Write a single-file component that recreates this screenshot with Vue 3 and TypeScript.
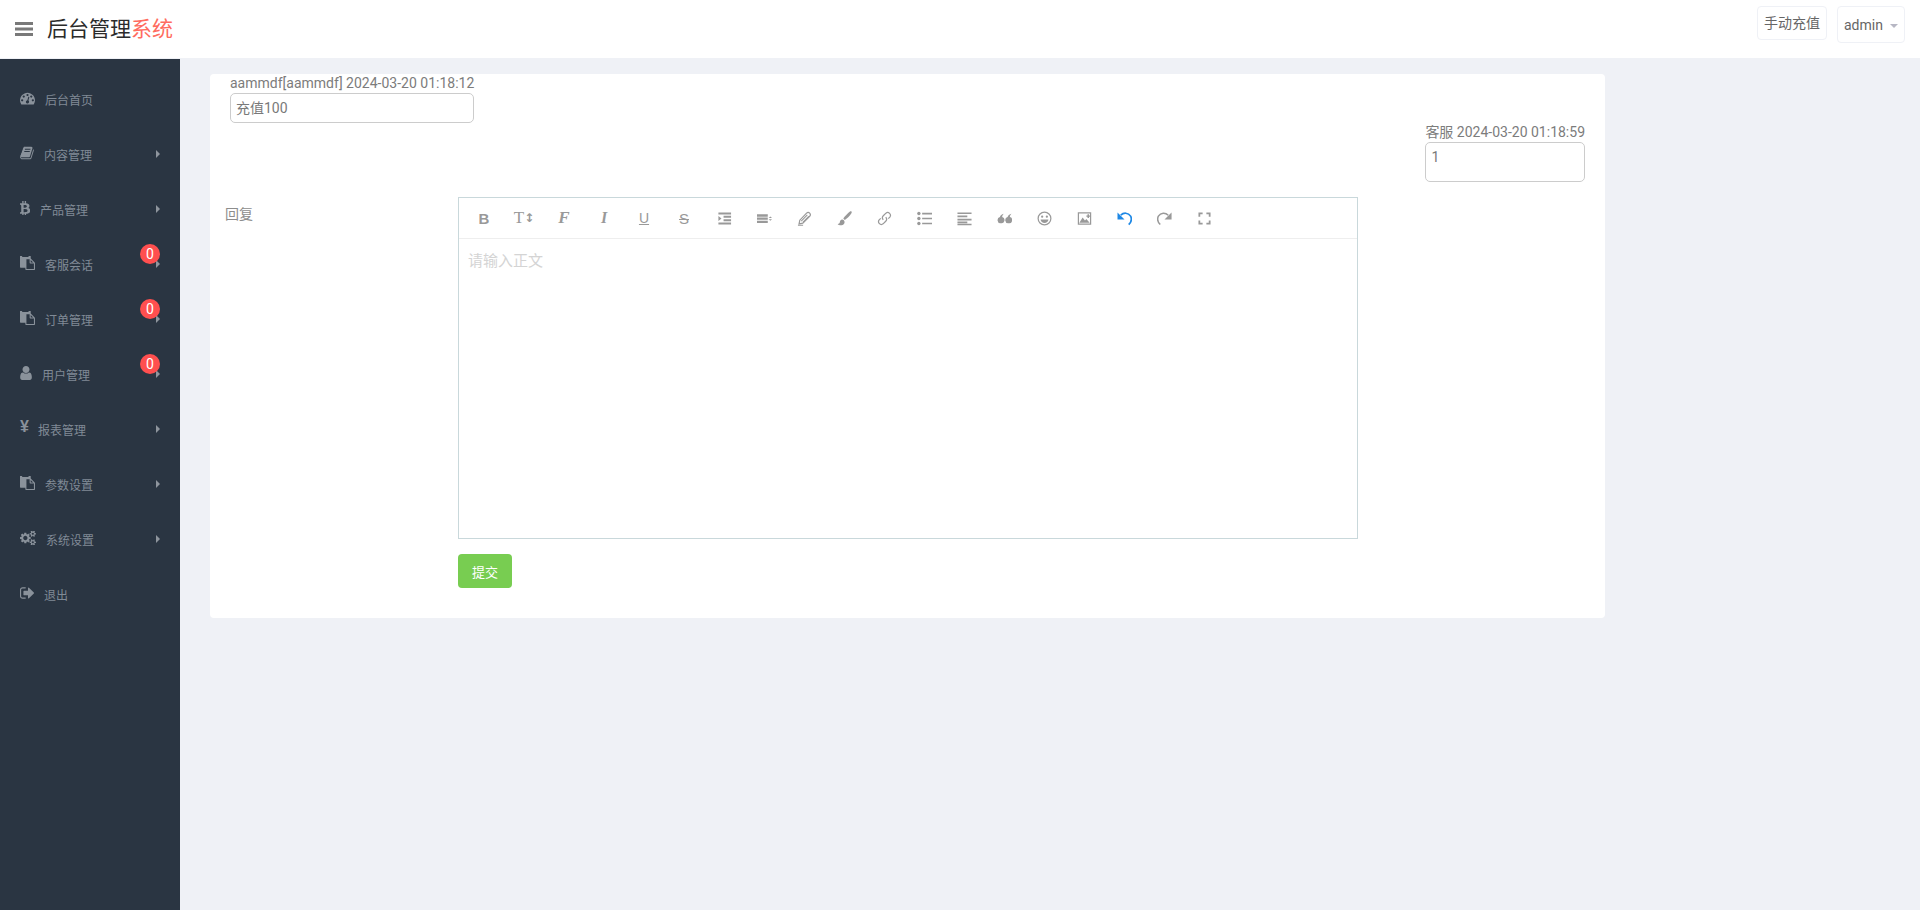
<template>
  <div class="page">
    <header class="topbar">
      <div class="brand">
        <svg class="burger" viewBox="0 0 18 14" width="18" height="14">
          <rect width="18" height="3" y="0" />
          <rect width="18" height="3" y="5.5" />
          <rect width="18" height="3" y="11" />
        </svg>
        <div class="logo">后台管理<span>系统</span></div>
      </div>
      <div class="top-actions">
        <button type="button" class="top-btn">手动充值</button>
        <button type="button" class="top-btn admin">admin<i class="caret"></i></button>
      </div>
    </header>

    <div class="body">
      <aside class="sidebar">
        <a v-for="item in menu" :key="item.label" class="menu-item">
          <svg
            v-if="item.icon"
            class="menu-icon"
            :viewBox="item.icon.box"
            :width="item.icon.width"
            height="14"
          >
            <path :d="item.icon.d" />
          </svg>
          <span v-else class="yen">¥</span>
          <span class="menu-label">{{ item.label }}</span>
          <i v-if="item.arrow" class="arrow"></i>
          <span v-if="item.badge !== undefined" class="badge">{{ item.badge }}</span>
        </a>
      </aside>

      <main class="main">
        <section class="card">
          <div class="msg">
            <div class="msg-inner">
              <div class="msg-meta">aammdf[aammdf] 2024-03-20 01:18:12</div>
              <div class="msg-text">充值100</div>
            </div>
          </div>
          <div class="msg msg-right">
            <div class="msg-inner">
              <div class="msg-meta">客服 2024-03-20 01:18:59</div>
              <div class="msg-text tall">1</div>
            </div>
          </div>

          <form class="reply" @submit.prevent>
            <label class="reply-label">回复</label>
            <div class="reply-field">
              <div class="editor">
                <div class="toolbar">
                  <span v-for="(tool, i) in tools" :key="i" class="tool" :class="tool.cls">
                    <template v-if="tool.text">{{ tool.text }}</template>
                    <small v-if="tool.sub">{{ tool.sub }}</small>
                    <svg v-if="tool.svg" viewBox="0 0 16 16" width="15" height="15" v-html="tool.svg"></svg>
                  </span>
                </div>
                <div class="editor-body">请输入正文</div>
              </div>
              <button type="submit" class="submit">提交</button>
            </div>
          </form>
        </section>
      </main>
    </div>
  </div>
</template>

<script setup lang="ts">
interface MenuIcon {
  box: string
  width: number
  d: string
}

interface MenuItem {
  label: string
  icon?: MenuIcon
  arrow?: boolean
  badge?: number
}

interface Tool {
  text?: string
  sub?: string
  cls?: string
  svg?: string
}

const gauge: MenuIcon = {
  box: '0 200 1792 1350',
  width: 15,
  d: 'M384 1152q0-53-37.5-90.5t-90.5-37.5-90.5 37.5-37.5 90.5 37.5 90.5 90.5 37.5 90.5-37.5 37.5-90.5zm192-448q0-53-37.5-90.5t-90.5-37.5-90.5 37.5-37.5 90.5 37.5 90.5 90.5 37.5 90.5-37.5 37.5-90.5zm428 481l101-382q6-26-7.5-48.5t-38.5-29.5-48 6.5-30 39.5l-101 382q-60 5-107 43.5t-63 98.5q-20 77 20 146t117 89 146-20 89-117q16-60-6-117t-72-91zm660-33q0-53-37.5-90.5t-90.5-37.5-90.5 37.5-37.5 90.5 37.5 90.5 90.5 37.5 90.5-37.5 37.5-90.5zm-640-640q0-53-37.5-90.5t-90.5-37.5-90.5 37.5-37.5 90.5 37.5 90.5 90.5 37.5 90.5-37.5 37.5-90.5zm448 192q0-53-37.5-90.5t-90.5-37.5-90.5 37.5-37.5 90.5 37.5 90.5 90.5 37.5 90.5-37.5 37.5-90.5zm320 448q0 261-141 483-19 29-54 29h-1402q-35 0-54-29-141-221-141-483 0-182 71-348t191-286 286-191 348-71 348 71 286 191 191 286 71 348z',
}

const book: MenuIcon = {
  box: '50 130 1700 1530',
  width: 14,
  d: 'M1703 478q40 57 18 129l-275 906q-19 64-76.5 107.5t-122.5 43.5h-923q-77 0-148.5-53.5t-99.5-131.5q-24-67-2-127 0-4 3-27t4-37q1-8-3-21.5t-3-19.5q2-11 8-21t16.5-23.5 16.5-23.5q23-38 45-91.5t30-91.5q3-10 .5-30t-.5-28q3-11 17-28t17-23q21-36 42-92t25-90q1-9-2.5-32t.5-28q4-13 22-30.5t22-22.5q19-26 42.5-84.5t27.5-96.5q1-8-3-25.5t-2-26.5q2-8 9-18t18-23 17-21q8-12 16.5-30.5t15-35 16-36 19.5-32 26.5-23.5 36-11.5 47.5 5.5l-1 3q38-9 51-9h761q74 0 114 56t18 130l-274 906q-36 119-71.5 153.5t-128.5 34.5h-869q-27 0-38 15-11 16-1 43 24 70 144 70h923q29 0 56-15.5t35-41.5l300-987q7-22 5-57 38 15 59 43zm-1064 2q-4 13 2 22.5t20 9.5h608q13 0 25.5-9.5t16.5-22.5l21-64q4-13-2-22.5t-20-9.5h-608q-13 0-25.5 9.5t-16.5 22.5zm-83 256q-4 13 2 22.5t20 9.5h608q13 0 25.5-9.5t16.5-22.5l21-64q4-13-2-22.5t-20-9.5h-608q-13 0-25.5 9.5t-16.5 22.5z',
}

const btc: MenuIcon = {
  box: '120 130 1110 1530',
  width: 10,
  d: 'M1167 640q18 182-131 258 117 28 175 103t45 214q-7 71-32.5 125t-64.5 89-97 58.5-121.5 34.5-145.5 15v255h-154v-251q-80 0-122-1v252h-154v-255q-18 0-54-.5t-55-.5h-200l31-183h111q50 0 58-51v-402h16q-6-1-16-1v-287q-13-68-89-68h-111v-164l212 1q64 0 97-1v-252h154v247q82-2 122-2v-245h154v252q79 7 140 22.5t113 45 82.5 78 36.5 114.5zm-215 545q0-36-15-64t-37-46-57.5-30.5-65.5-18.5-74-9-69-3-64.5 1-47.5 1v338q8 0 37 .5t48 .5 53-1.5 58.5-4 57-8.5 55.5-14 47.5-21 39.5-30 24.5-40 9.5-51zm-71-476q0-33-12.5-58.5t-30.5-42-48-28-55-16.5-61.5-8-58-2.5-54 1-39.5.5v307q5 0 34.5.5t46.5 0 50-2 55-5.5 51.5-11 48.5-18.5 37-27 27-38.5 9-51z',
}

const paste: MenuIcon = {
  box: '0 128 1792 1664',
  width: 15,
  d: 'M768 1664h896v-640h-416q-40 0-68-28t-28-68v-416h-384v1152zm256-1440v-64q0-13-9.5-22.5t-22.5-9.5h-704q-13 0-22.5 9.5t-9.5 22.5v64q0 13 9.5 22.5t22.5 9.5h704q13 0 22.5-9.5t9.5-22.5zm256 672h299l-299-299v299zm512 128v672q0 40-28 68t-68 28h-960q-40 0-68-28t-28-68v-160h-544q-40 0-68-28t-28-68v-1344q0-40 28-68t68-28h1088q40 0 68 28t28 68v328q21 13 36 28l408 408q28 28 48 76t20 88z',
}

const user: MenuIcon = {
  box: '256 128 1280 1536',
  width: 12,
  d: 'M1536 1399q0 109-62.5 187t-150.5 78h-854q-88 0-150.5-78t-62.5-187q0-85 8.5-160.5t31.5-152 58.5-131 94-89 134.5-34.5q131 128 313 128t313-128q76 0 134.5 34.5t94 89 58.5 131 31.5 152 8.5 160.5zm-256-887q0 159-112.5 271.5t-271.5 112.5-271.5-112.5-112.5-271.5 112.5-271.5 271.5-112.5 271.5 112.5 112.5 271.5z',
}

const cogs: MenuIcon = {
  box: '0 128 1920 1536',
  width: 16,
  d: 'M896 896q0-106-75-181t-181-75-181 75-75 181 75 181 181 75 181-75 75-181zm768 512q0-52-38-90t-90-38-90 38-38 90q0 53 37.5 90.5t90.5 37.5 90.5-37.5 37.5-90.5zm0-1024q0-52-38-90t-90-38-90 38-38 90q0 53 37.5 90.5t90.5 37.5 90.5-37.5 37.5-90.5zm-384 421v185q0 10-7 19.5t-16 10.5l-155 24q-11 35-32 76 34 48 90 115 7 11 7 20 0 12-7 19-23 30-82.5 89.5t-78.5 59.5q-11 0-21-7l-115-90q-37 19-77 31-11 108-23 155-7 24-30 24h-186q-11 0-20-7.5t-10-17.5l-23-153q-34-10-75-31l-118 89q-7 7-20 7-11 0-21-8-144-133-144-160 0-9 7-19 10-14 41-53t47-61q-23-44-35-82l-152-24q-10-1-17-9.5t-7-19.5v-185q0-10 7-19.5t16-10.5l155-24q11-35 32-76-34-48-90-115-7-11-7-20 0-12 7-20 22-30 82-89t79-59q11 0 21 7l115 90q34-18 77-32 11-108 23-154 7-24 30-24h186q11 0 20 7.5t10 17.5l23 153q34 10 75 31l118-89q8-7 20-7 11 0 21 8 144 133 144 160 0 8-7 19-12 16-42 54t-45 60q23 48 34 82l152 23q10 2 17 10.5t7 19.5zm640 533v140q0 16-149 31-12 27-30 52 51 113 51 138 0 4-4 7-122 71-124 71-8 0-46-47t-52-68q-20 2-30 2t-30-2q-14 21-52 68t-46 47q-2 0-124-71-4-3-4-7 0-25 51-138-18-25-30-52-149-15-149-31v-140q0-16 149-31 13-29 30-52-51-113-51-138 0-4 4-7 4-2 35-20t59-34 30-16q8 0 46 46.5t52 67.5q20-2 30-2t30 2q51-71 92-112l6-2q4 0 124 70 4 3 4 7 0 25-51 138 17 23 30 52 149 15 149 31zm0-1024v140q0 16-149 31-12 27-30 52 51 113 51 138 0 4-4 7-122 71-124 71-8 0-46-47t-52-68q-20 2-30 2t-30-2q-14 21-52 68t-46 47q-2 0-124-71-4-3-4-7 0-25 51-138-18-25-30-52-149-15-149-31v-140q0-16 149-31 13-29 30-52-51-113-51-138 0-4 4-7 4-2 35-20t59-34 30-16q8 0 46 46.5t52 67.5q20-2 30-2t30 2q51-71 92-112l6-2q4 0 124 70 4 3 4 7 0 25-51 138 17 23 30 52 149 15 149 31z',
}

const signOut: MenuIcon = {
  box: '64 224 1568 1344',
  width: 14,
  d: 'M704 1440q0 4 1 20t.5 26.5-3 23.5-10 19.5-20.5 6.5h-320q-119 0-203.5-84.5t-84.5-203.5v-704q0-119 84.5-203.5t203.5-84.5h320q13 0 22.5 9.5t9.5 22.5q0 4 1 20t.5 26.5-3 23.5-10 19.5-20.5 6.5h-320q-66 0-113 47t-47 113v704q0 66 47 113t113 47h312l11.5 1 11.5 3 8 5.5 7 9 2 13.5zm928-544q0 26-19 45l-544 544q-19 19-45 19t-45-19-19-45v-288h-448q-26 0-45-19t-19-45v-384q0-26 19-45t45-19h448v-288q0-26 19-45t45-19 45 19l544 544q19 19 19 45z',
}

const menu: MenuItem[] = [
  { label: '后台首页', icon: gauge },
  { label: '内容管理', icon: book, arrow: true },
  { label: '产品管理', icon: btc, arrow: true },
  { label: '客服会话', icon: paste, arrow: true, badge: 0 },
  { label: '订单管理', icon: paste, arrow: true, badge: 0 },
  { label: '用户管理', icon: user, arrow: true, badge: 0 },
  { label: '报表管理', arrow: true },
  { label: '参数设置', icon: paste, arrow: true },
  { label: '系统设置', icon: cogs, arrow: true },
  { label: '退出', icon: signOut },
]

// 编辑器工具栏,字母按钮用真实文字,其余是 svg
const tools: Tool[] = [
  { text: 'B', cls: 't-bold' },
  { text: 'T', sub: '↕', cls: 't-size' },
  { text: 'F', cls: 't-font' },
  { text: 'I', cls: 't-italic' },
  { text: 'U', cls: 't-under' },
  { text: 'S', cls: 't-strike' },
  { svg: '<path d="M1.500 1.500h13.500v2.200H1.500zM7 5.100h8v2.200H7zM7 8.700h8v2.200H7zM1.500 12.300h13.500v2.200H1.500zM1.500 5.400l3.300 2.600-3.300 2.600z"/>' },
  { svg: '<path d="M0 3.500h11.500v2.500H0zM0 6.900h11.500v2.500H0zM0 10.300h11.500v2.500H0zM12.500 7.500 14.200 5.800 16 7.500zM12.500 8.700H16l-1.800 1.700z"/>' },
  { svg: '<path d="M2.200 13.800l.8-4L10.200 2.300c1-.9 2.500-.8 3.300 0s.9 2.300 0 3.300L6.200 13z" fill="none" stroke="currentColor" stroke-width="1.300"/><path d="M4.500 10.800 11 4.200M6.200 12 12.500 5.600M1 15.200h5.500" fill="none" stroke="currentColor" stroke-width="1.100"/>' },
  { svg: '<path d="M15.500.6c-.5-.5-1.200-.4-1.700 0C11.500 2.600 8 6 6.700 8l1.600 1.600C10.300 8.300 13.800 5 15.400 2.300c.4-.6.500-1.200.1-1.700zM5.700 9C3.600 9 3.200 10.600 3 12c-.2 1.100-1.100 1.700-2.300 2 1.700 1.500 5.300 1.700 6.900-.5C8.700 12 8 9.300 5.700 9z"/>' },
  { svg: '<path d="M9.300 6.700a3 3 0 0 1 0 4.200l-2.800 2.800a3 3 0 0 1-4.200-4.200L4 7.800M6.700 9.300a3 3 0 0 1 0-4.200l2.800-2.800a3 3 0 0 1 4.200 4.200L12 8.200" fill="none" stroke="currentColor" stroke-width="1.300"/>' },
  { svg: '<path d="M5.500 1.800H16v1.800H5.500zM5.500 7.100H16v1.800H5.500zM5.500 12.400H16v1.800H5.500z"/><circle cx="2" cy="2.700" r="1.800"/><circle cx="2" cy="8" r="1.800"/><circle cx="2" cy="13.300" r="1.800"/>' },
  { svg: '<path d="M.5 1.500h15v1.800H.5zM.5 4.900h10.500v1.800H.5zM.5 8.300h15v1.800H.5zM.5 11.200h10.500V13H.5zM.5 13.600h15v1.600H.5z"/>' },
  { svg: '<path d="M3.700 13a3.300 3.300 0 0 1-.6-6.500C3.700 4.700 5 3.500 7.200 3c-1 1.100-1.600 2-1.700 3.500A3.300 3.300 0 0 1 3.700 13zM11.900 13a3.300 3.300 0 0 1-.6-6.500c.6-1.800 1.900-3 4.100-3.500-1 1.100-1.600 2-1.700 3.500a3.300 3.300 0 0 1-1.800 6.500z"/>' },
  { svg: '<circle cx="8" cy="8" r="6.800" fill="none" stroke="currentColor" stroke-width="1.300"/><circle cx="5.500" cy="6" r="1.200"/><circle cx="10.500" cy="6" r="1.200"/><path d="M3.800 9h8.400c-.3 2.300-2 3.700-4.200 3.700S4.100 11.300 3.800 9z"/>' },
  { svg: '<path d="M1.500 2h13v12h-13z" fill="none" stroke="currentColor" stroke-width="1.300"/><path d="M2.500 12.500 6 7l2.500 3 1.500-1.500 3.500 4z"/><path d="M11.200 3.500h1.600v1.300H14v1.300h-1.200v1.300h-1.600V6.100H10V4.800h1.200z"/>' },
  { cls: 'undo', svg: '<path d="M4 4.500C7 1.500 12 1.500 14.500 5.500 16 8.500 15 12 12.500 14.500" fill="none" stroke="currentColor" stroke-width="1.800"/><path d="M.5 1.500V9h7.500z"/>' },
  { svg: '<path d="M12 4.500C9 1.500 4 1.500 1.500 5.500 0 8.500 1 12 3.500 14.500" fill="none" stroke="currentColor" stroke-width="1.600"/><path d="M15.500 1.500V9H8z"/>' },
  { svg: '<path d="M2.500 6V2.500H6M10 2.500h3.500V6M13.500 10v3.500H10M6 13.500H2.500V10" fill="none" stroke="currentColor" stroke-width="1.900"/>' },
]
</script>

<style scoped>
.page {
  min-height: 910px;
  display: flex;
  flex-direction: column;
  font-family: Roboto, 'Noto Sans CJK SC', sans-serif;
  font-size: 14px;
  color: #797979;
  background: #eff1f6;
}

/* 顶部 */
.topbar {
  height: 58px;
  flex: none;
  background: #fff;
  display: flex;
  justify-content: space-between;
  align-items: flex-start;
  padding-right: 15px;
  margin-bottom: 1px;
}

.brand {
  display: flex;
  align-items: center;
  height: 58px;
  padding-left: 15px;
}

.burger {
  fill: #797979;
}

.logo {
  margin-left: 14px;
  margin-top: -5px;
  font-size: 21px;
  color: #2b2b2b;
  font-family: 'Noto Sans CJK SC', sans-serif;
}

.logo span {
  color: #ff6c60;
}

.top-actions {
  display: flex;
  align-items: flex-start;
  gap: 10px;
  padding-top: 6px;
}

.top-btn {
  height: 34px;
  padding: 0 6px 3px;
  border: 1px solid #eff1f6;
  border-radius: 4px;
  background: #fff;
  color: #666;
  font: inherit;
  line-height: 28px;
  font-family: 'Noto Sans CJK SC', sans-serif;
}

.admin {
  height: 37px;
  width: 68px;
  padding-bottom: 0;
  font-family: Roboto, sans-serif;
  font-size: 14px;
  display: flex;
  align-items: center;
  justify-content: space-between;
}

.caret {
  width: 0;
  height: 0;
  border-left: 4px solid transparent;
  border-right: 4px solid transparent;
  border-top: 4px solid #b7b7c4;
  margin-top: 2px;
}

/* 侧边栏 */
.body {
  flex: 1;
  display: flex;
}

.sidebar {
  width: 180px;
  flex: none;
  box-sizing: border-box;
  background: #2a3542;
  padding-top: 12px;
}

.menu-item {
  position: relative;
  height: 55px;
  display: flex;
  align-items: center;
  padding: 0 20px;
  color: #808a96;
  font-size: 12px;
  font-family: 'Noto Sans CJK SC', sans-serif;
}

.menu-label {
  padding-top: 1px;
}

.menu-icon {
  fill: #8a929b;
  flex: none;
  margin-right: 10px;
  margin-top: -1px;
}

.yen {
  width: 8px;
  margin-right: 10px;
  font-size: 16px;
  font-weight: 700;
  color: #8a929b;
  font-family: 'Liberation Sans', sans-serif;
  margin-top: -3px;
}

.arrow {
  margin-left: auto;
  width: 0;
  height: 0;
  border-top: 4px solid transparent;
  border-bottom: 4px solid transparent;
  border-left: 4px solid #8e959d;
}

.badge {
  position: absolute;
  left: 140px;
  top: 8px;
  width: 20px;
  height: 20px;
  border-radius: 50%;
  background: #ff4f4f;
  color: #fff;
  font-size: 14px;
  line-height: 20px;
  text-align: center;
  font-family: Roboto, sans-serif;
}

/* 内容 */
.main {
  flex: 1;
  padding: 15px 30px;
}

.card {
  width: 1395px;
  box-sizing: border-box;
  background: #fff;
  border-radius: 4px;
  padding: 0 20px 30px 15px;
}

.msg {
  padding-left: 5px;
}

.msg-right {
  display: flex;
  justify-content: flex-end;
}

.msg-inner {
  display: inline-block;
}

.msg-meta {
  line-height: 19px;
  color: #7c7c7c;
}

.msg-text {
  box-sizing: border-box;
  height: 30px;
  padding: 4px 5px;
  border: 1px solid #ccc;
  border-radius: 5px;
  line-height: 20px;
}

.tall {
  height: 40px;
}

.reply {
  display: flex;
  margin-top: 15px;
}

.reply-label {
  width: 233px;
  flex: none;
  padding-top: 7px;
  line-height: 20px;
  color: #8d8d8d;
}

.editor {
  width: 900px;
  height: 342px;
  box-sizing: border-box;
  border: 1px solid #c9d8db;
}

.toolbar {
  height: 40px;
  padding: 0 5px;
  display: flex;
  border-bottom: 1px solid #eeeeee;
  color: #999;
}

.tool {
  width: 40px;
  height: 40px;
  flex: none;
  display: flex;
  align-items: center;
  justify-content: center;
  fill: currentColor;
  color: #999;
  font-size: 15px;
  font-family: 'Liberation Sans', sans-serif;
}

.t-bold {
  font-weight: 700;
}

.t-size {
  font-family: 'Liberation Serif', serif;
  font-size: 17px;
}

.t-size small {
  font-size: 12px;
  font-family: 'DejaVu Sans', sans-serif;
  font-weight: 700;
}

.t-font {
  font-family: 'Liberation Serif', serif;
  font-style: italic;
  font-weight: 700;
  font-size: 17px;
}

.t-italic {
  font-family: 'Liberation Serif', serif;
  font-style: italic;
  font-weight: 700;
  font-size: 16px;
}

.t-under {
  text-decoration: underline;
  font-size: 14px;
}

.t-strike {
  text-decoration: line-through;
}

.undo {
  color: #1e88e5;
}

.editor-body {
  padding: 8px 9px;
  line-height: 26px;
  font-size: 15px;
  color: #d4d4d4;
  font-family: 'Noto Sans CJK SC', sans-serif;
}

.submit {
  display: block;
  margin-top: 15px;
  width: 54px;
  height: 34px;
  border: none;
  border-radius: 4px;
  background: #78cd51;
  color: #fff;
  font-size: 13px;
  font-family: 'Noto Sans CJK SC', sans-serif;
}
</style>

<style>
html,
body {
  margin: 0;
  background: #eff1f6;
}
</style>
